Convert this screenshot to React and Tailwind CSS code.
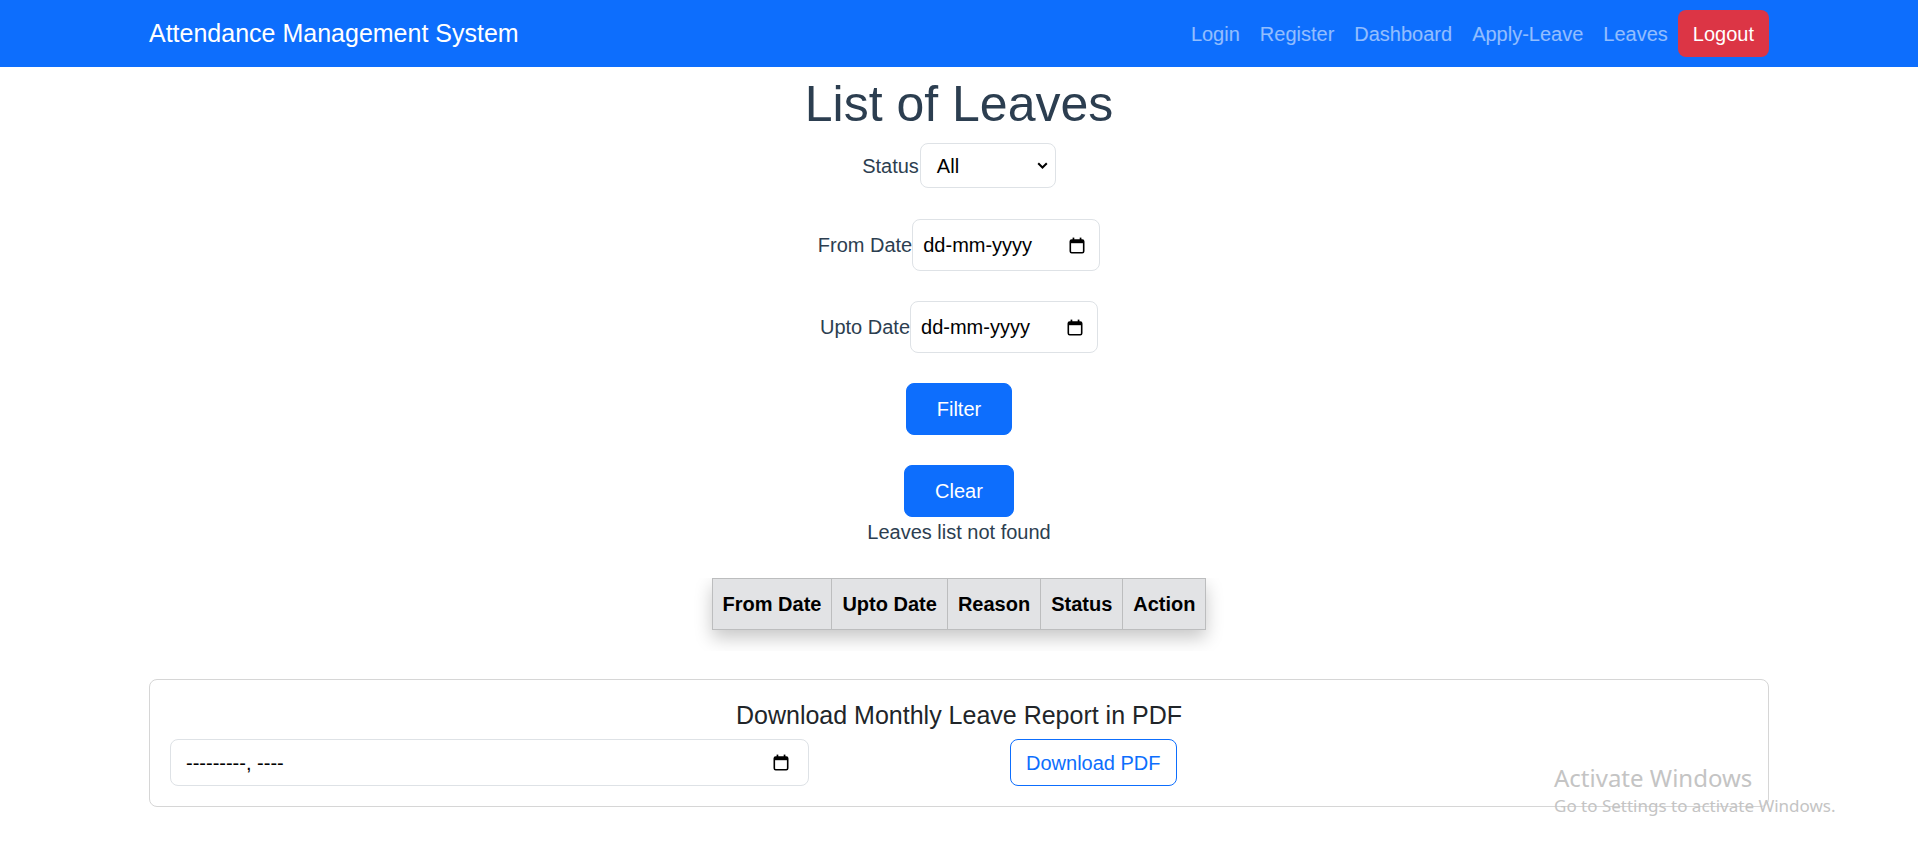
const navLinks = ['Login', 'Register', 'Dashboard', 'Apply-Leave', 'Leaves'];
const columns = ['From Date', 'Upto Date', 'Reason', 'Status', 'Action'];

const CalendarIcon = ({ className = '' }) => (
  <svg className={className} width="16" height="17" viewBox="0 0 16 17" fill="none">
    <rect x="1.3" y="3" width="13.4" height="12.7" rx="1.4" stroke="#000" strokeWidth="1.6" />
    <rect x="1.3" y="3" width="13.4" height="3.2" fill="#000" />
    <rect x="3.6" y="0.6" width="1.7" height="3" fill="#000" />
    <rect x="10.7" y="0.6" width="1.7" height="3" fill="#000" />
  </svg>
);

const Chevron = () => (
  <svg width="11" height="7" viewBox="0 0 11 7" fill="none">
    <path d="M1.2 1.2 5.5 5.5 9.8 1.2" stroke="#000" strokeWidth="2" />
  </svg>
);

const DateField = ({ label }) => (
  <div className="flex items-center">
    <span className="text-[20px] leading-[30px] text-[#2c3e50]">{label}</span>
    <div className="flex h-[52px] w-[188px] items-center justify-between rounded-[8px] border border-[#dee2e6] pl-[10px] pr-[14px]">
      <span className="text-[20px] text-black">dd-mm-yyyy</span>
      <CalendarIcon />
    </div>
  </div>
);

const PrimaryButton = ({ children }) => (
  <button className="flex h-[52px] items-center rounded-[8px] border border-[#0d6efd] bg-[#0d6efd] px-[30px] text-[20px] leading-[30px] text-white">
    {children}
  </button>
);

const Navbar = () => (
  <nav className="h-[67px] bg-[#0d6efd]">
    <div className="mx-auto flex h-full w-[1650px] items-center justify-between px-[15px]">
      <span className="text-[25px] text-white">Attendance Management System</span>
      <div className="flex items-center">
        {navLinks.map((link) => (
          <a key={link} className="px-[10px] text-[20px] leading-[30px] text-white/55">
            {link}
          </a>
        ))}
        <button className="flex h-[47px] items-center rounded-[8px] bg-[#dc3545] px-[15px] text-[20px] text-white">
          Logout
        </button>
      </div>
    </div>
  </nav>
);

const App = () => {
  return (
    <div className="relative min-h-[861px] bg-white font-['Liberation_Sans',Arial,sans-serif]">
      <Navbar />

      <div className="flex flex-col items-center">
        <h1 className="mt-[7px] mb-[9px] text-[50px] leading-[60px] font-normal text-[#2c3e50]">
          List of Leaves
        </h1>

        <div className="flex items-center">
          <span className="text-[20px] leading-[30px] text-[#2c3e50]">Status</span>
          <div className="ml-[1px] flex h-[45px] w-[136px] items-center justify-between rounded-[8px] border border-[#dee2e6] pl-[16px] pr-[7px]">
            <span className="text-[20px] text-black">All</span>
            <Chevron />
          </div>
        </div>

        <div className="mt-[31px]">
          <DateField label="From Date" />
        </div>
        <div className="mt-[30px]">
          <DateField label="Upto Date" />
        </div>

        <div className="mt-[30px]">
          <PrimaryButton>Filter</PrimaryButton>
        </div>
        <div className="mt-[30px]">
          <PrimaryButton>Clear</PrimaryButton>
        </div>
        <p className="text-[20px] leading-[30px] text-[#2c3e50]">Leaves list not found</p>

        <div className="mt-[31px] overflow-hidden px-[30px] pb-[21px]">
          <table className="border-collapse shadow-[0_8px_18px_rgba(0,0,0,0.22)]">
            <thead>
              <tr className="bg-[#e2e3e5]">
                {columns.map((col) => (
                  <th
                    key={col}
                    className="border border-[#bcbdbe] px-[10px] py-[10px] text-[20px] leading-[30px] font-bold text-black"
                  >
                    {col}
                  </th>
                ))}
              </tr>
            </thead>
          </table>
        </div>
      </div>

      <div className="mx-auto mt-[28px] w-[1650px] px-[15px]">
        <div className="rounded-[8px] border border-[#d6d6d6] p-[20px]">
          <h5 className="mb-[9px] text-center text-[25px] leading-[30px] text-[#212529]">
            Download Monthly Leave Report in PDF
          </h5>
          <div className="flex items-center">
            <div className="flex h-[47px] w-[639px] items-center justify-between rounded-[8px] border border-[#dee2e6] pl-[15px] pr-[19px]">
              <span className="text-[20px] text-black">---------, ----</span>
              <CalendarIcon />
            </div>
            <button className="ml-[201px] flex h-[47px] items-center rounded-[8px] border border-[#0d6efd] px-[15px] text-[20px] text-[#0d6efd]">
              Download PDF
            </button>
          </div>
        </div>
      </div>

      <div className="pointer-events-none absolute left-[1554px] top-[762px] font-['Noto_Sans',sans-serif] text-[#c4c4c4]">
        <div className="text-[24px] leading-[32px]">Activate Windows</div>
        <div className="text-[17px] leading-[24px]">Go to Settings to activate Windows.</div>
      </div>
    </div>
  );
};

export default App;
